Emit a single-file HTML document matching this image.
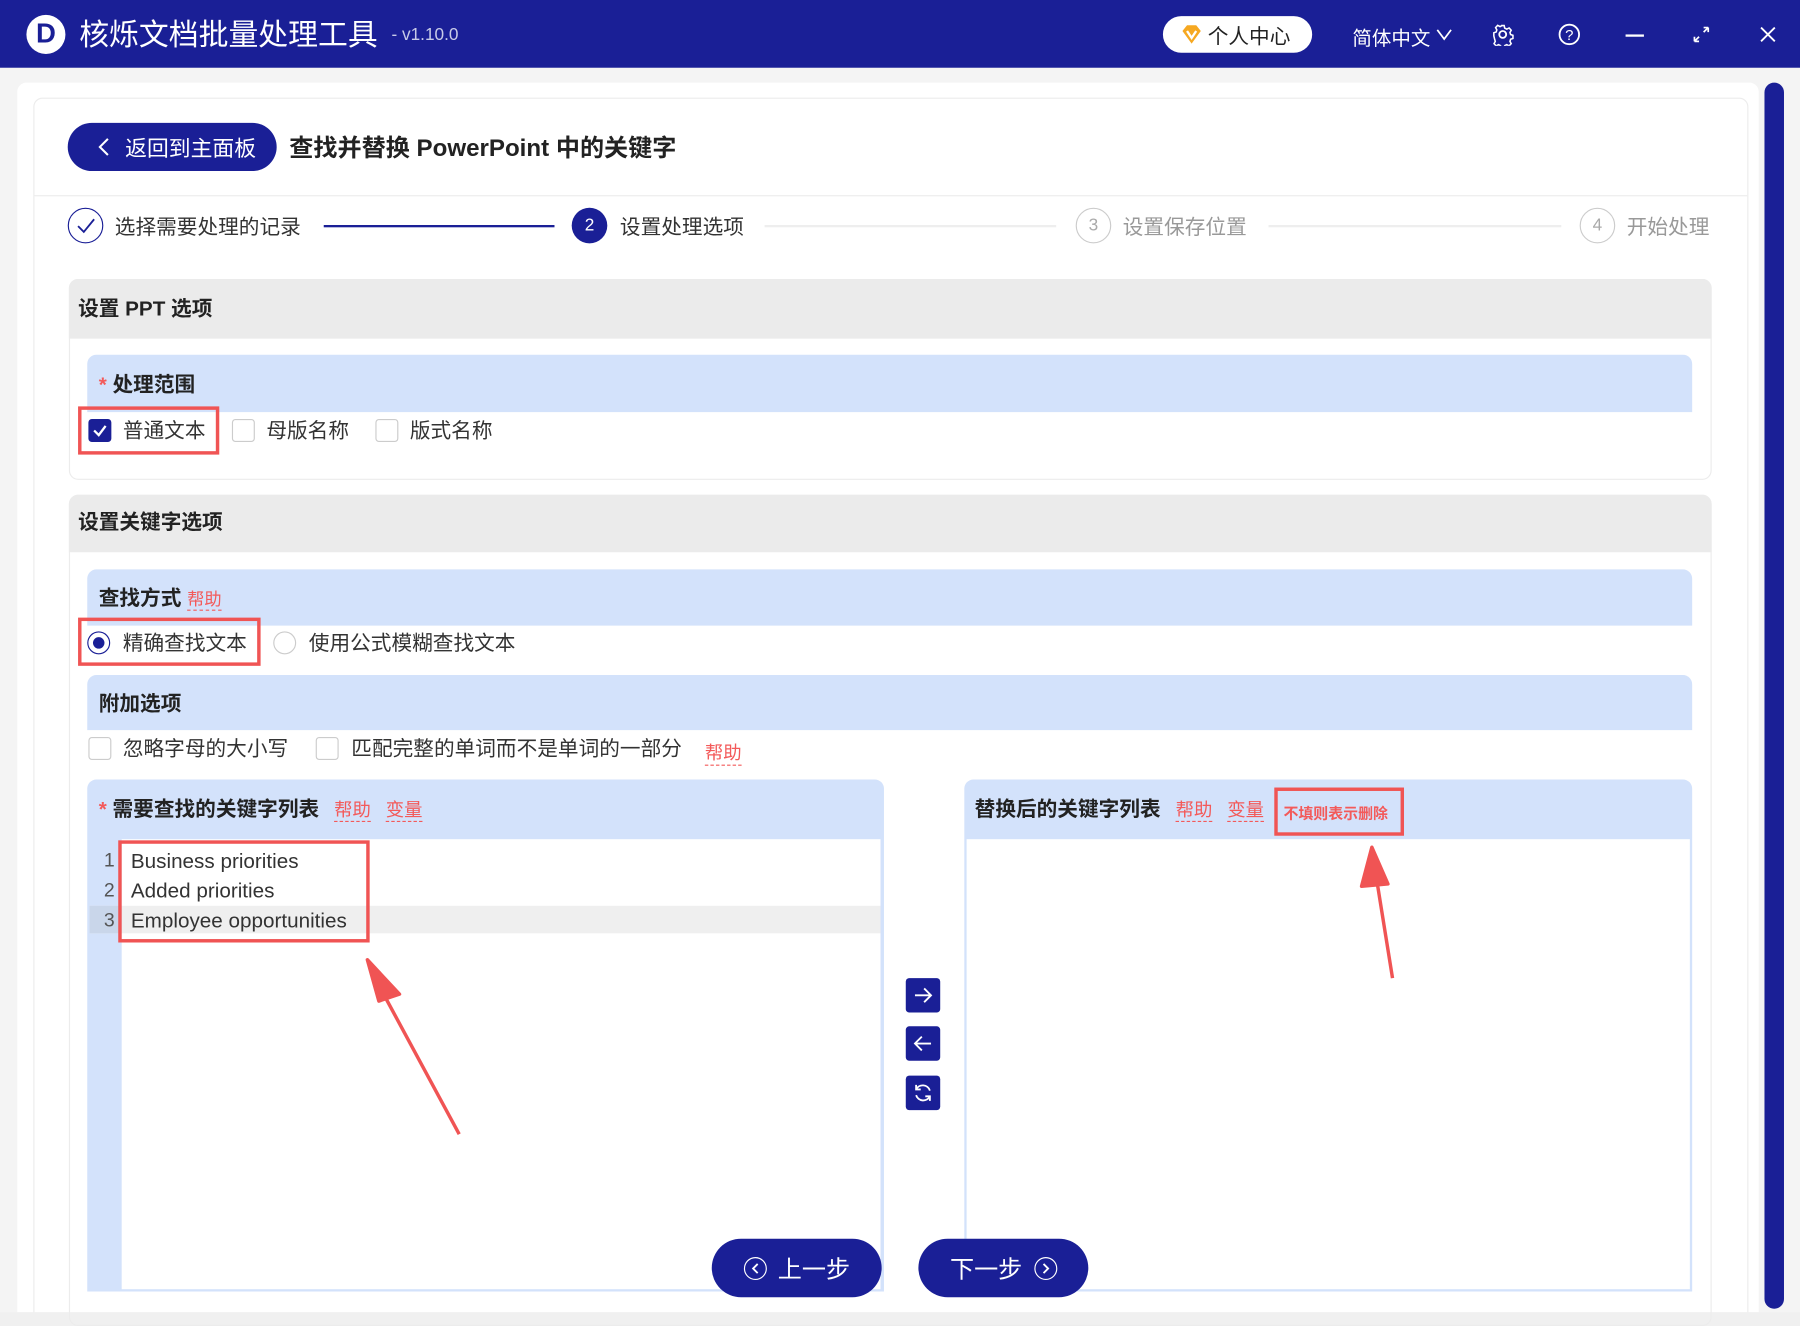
<!DOCTYPE html>
<html><head><meta charset="utf-8"><style>
*{margin:0;padding:0;box-sizing:border-box}
html,body{width:1800px;height:1326px;overflow:hidden;background:#fff}
#w{position:absolute;left:0;top:0;width:1568px;height:1155px;transform:scale(1.148);transform-origin:0 0;font-family:"Liberation Sans","Noto Sans CJK SC",sans-serif;color:#333;background:#f4f4f4}
.a{position:absolute;white-space:nowrap}
.t{font-size:18px;line-height:20px}
.b{font-weight:bold;font-size:18px;color:#222;line-height:20px}
.hdr{position:absolute;background:#ebebeb;border-radius:8px 8px 0 0}
.sub{position:absolute;background:#d3e2fb;border-radius:8px 8px 0 0}
.cb{position:absolute;width:20px;height:20px;border:1px solid #ccc;border-radius:3px;background:#fff}
.red{color:#f35a5a}
.ul{border-bottom:1px dashed #f35a5a}
.rbox{position:absolute;border:3px solid #f05454}
.circ{position:absolute;width:31px;height:31px;border-radius:50%;text-align:center;line-height:29px;font-size:15px}
.mb{position:absolute;left:789px;width:30px;height:30px;background:#1a1f96;border-radius:3px}
.btn{position:absolute;top:1079px;width:148px;height:51px;border-radius:26px;background:#1a1f96;color:#fff;font-size:21px;display:flex;align-items:center;justify-content:center}
.ic{display:inline-flex;align-items:center;justify-content:center;width:20px;height:20px;border:1.6px solid #fff;border-radius:50%}
</style></head><body><div id="w">
<div class="a" style="left:0;top:0;width:1568px;height:59px;background:#1a1f96"></div>
<div class="a" style="left:23px;top:13px;width:34px;height:34px;border-radius:50%;background:#fff;color:#1a1f96;font-weight:bold;font-size:24px;line-height:34px;text-align:center">D</div>
<div class="a" style="left:69px;top:13px;color:#fff;font-size:26px;line-height:34px">核烁文档批量处理工具</div>
<div class="a" style="left:341px;top:22px;color:#c8cbe8;font-size:15px">- v1.10.0</div>
<div class="a" style="left:1013px;top:14px;width:130px;height:32px;border-radius:16px;background:#fff"></div>
<svg class="a" style="left:1029px;top:21px" width="18" height="18" viewBox="0 0 18 18"><path d="M1 6 L5 1 H13 L17 6 L9 17Z" fill="#f6a821"/><path d="M5 6 L9 12 L13 6" stroke="#fff" stroke-width="2" fill="none"/></svg>
<div class="a" style="left:1052px;top:18px;font-size:18px;color:#222">个人中心</div>
<div class="a" style="left:1178px;top:19px;font-size:17px;color:#fff">简体中文</div>
<svg class="a" style="left:1251px;top:24px" width="14" height="12"><path d="M1 2 L7 10 L13 2" stroke="#fff" stroke-width="1.5" fill="none"/></svg>
<svg class="a" style="left:1299px;top:20px" width="20" height="20" viewBox="0 0 20 20"><circle cx="10" cy="10" r="3" stroke="#fff" stroke-width="1.6" fill="none"/><path d="M8.5 1.5h3l.5 2.5 2 1 2.3-1.2 2 2.2-1.2 2.2.6 2 2.3.8v3l-2.3.8-.6 2 1.2 2.2-2 2.2-2.3-1.2-2 1-.5 2.5h-3l-.5-2.5-2-1-2.3 1.2-2-2.2 1.2-2.2-.6-2L1.5 11.5v-3l2.3-.8.6-2-1.2-2.2 2-2.2 2.3 1.2 2-1z" stroke="#fff" stroke-width="1.5" fill="none" transform="scale(.9) translate(1 1)"/></svg>
<svg class="a" style="left:1357px;top:20px" width="20" height="20"><circle cx="10" cy="10" r="8.5" stroke="#fff" stroke-width="1.6" fill="none"/><text x="10" y="15" font-size="13" fill="#fff" text-anchor="middle" font-family="Liberation Sans">?</text></svg>
<div class="a" style="left:1416px;top:30px;width:16px;height:2px;background:#fff"></div>
<svg class="a" style="left:1474px;top:22px" width="16" height="16"><path d="M2 14 L6 10 M14 2 L10 6 M2 14 v-4 M2 14 h4 M14 2 v4 M14 2 h-4" stroke="#fff" stroke-width="1.5" fill="none"/></svg>
<svg class="a" style="left:1532px;top:22px" width="16" height="16"><path d="M2 2 L14 14 M14 2 L2 14" stroke="#fff" stroke-width="1.6"/></svg>
<div class="a" style="left:15px;top:72px;width:1517px;height:1083px;background:#fff;border-radius:8px"></div>
<div class="a" style="left:29px;top:85px;width:1494px;height:1070px;background:#fff;border:1px solid #ececec;border-radius:8px"></div>
<div class="a" style="left:1537px;top:72px;width:17px;height:1068px;background:#1a1f96;border-radius:9px"></div>
<div class="a" style="left:0;top:1143px;width:1568px;height:12px;background:#f0f0f0"></div>
<div class="a" style="left:59px;top:107px;width:182px;height:42px;border-radius:21px;background:#1a1f96"></div>
<svg class="a" style="left:84px;top:119px" width="12" height="18"><path d="M10 2 L3 9 L10 16" stroke="#fff" stroke-width="1.8" fill="none"/></svg>
<div class="a" style="left:109px;top:115px;color:#fff;font-size:19px">返回到主面板</div>
<div class="a" style="left:252px;top:113px;font-size:21px;font-weight:bold;color:#222">查找并替换 PowerPoint 中的关键字</div>
<div class="a" style="left:30px;top:170px;width:1492px;height:1px;background:#ececec"></div>
<div class="circ" style="left:59px;top:181px;border:1px solid #1a1f96"></div>
<svg class="a" style="left:65px;top:188px" width="20" height="18"><path d="M3 9 L8 14 L17 3" stroke="#1a1f96" stroke-width="1.6" fill="none"/></svg>
<div class="a t" style="left:100px;top:188px;color:#333">选择需要处理的记录</div>
<div class="a" style="left:282px;top:196px;width:201px;height:2px;background:#1a1f96"></div>
<div class="circ" style="left:498px;top:181px;background:#1a1f96;color:#fff;line-height:31px">2</div>
<div class="a t" style="left:540px;top:188px;color:#333">设置处理选项</div>
<div class="a" style="left:666px;top:196px;width:254px;height:2px;background:#eee"></div>
<div class="circ" style="left:937px;top:181px;border:1px solid #ccc;color:#aaa">3</div>
<div class="a t" style="left:978px;top:188px;color:#999">设置保存位置</div>
<div class="a" style="left:1105px;top:196px;width:255px;height:2px;background:#eee"></div>
<div class="circ" style="left:1376px;top:181px;border:1px solid #ccc;color:#aaa">4</div>
<div class="a t" style="left:1417px;top:188px;color:#999">开始处理</div>
<div class="a" style="left:60px;top:243px;width:1431px;height:175px;border:1px solid #ececec;border-radius:8px"></div>
<div class="hdr" style="left:60px;top:243px;width:1431px;height:52px"></div>
<div class="a b" style="left:68px;top:259px">设置 PPT 选项</div>
<div class="sub" style="left:76px;top:309px;width:1398px;height:50px"></div>
<div class="a b" style="left:86px;top:325px"><span class="red">*</span> 处理范围</div>
<div class="cb" style="left:77px;top:365px;background:#1a1f96;border-color:#1a1f96"></div>
<svg class="a" style="left:79px;top:367px" width="16" height="16"><path d="M3 8 L7 12 L13 4" stroke="#fff" stroke-width="2" fill="none"/></svg>
<div class="a t" style="left:107px;top:365px">普通文本</div>
<div class="rbox" style="left:68px;top:354px;width:123px;height:42px"></div>
<div class="cb" style="left:202px;top:365px"></div>
<div class="a t" style="left:232px;top:365px">母版名称</div>
<div class="cb" style="left:327px;top:365px"></div>
<div class="a t" style="left:357px;top:365px">版式名称</div>
<div class="a" style="left:60px;top:431px;width:1431px;height:724px;border:1px solid #ececec;border-radius:8px"></div>
<div class="hdr" style="left:60px;top:431px;width:1431px;height:50px"></div>
<div class="a b" style="left:68px;top:445px">设置关键字选项</div>
<div class="sub" style="left:76px;top:496px;width:1398px;height:49px"></div>
<div class="a b" style="left:86px;top:511px">查找方式 <span class="red ul" style="font-weight:normal;font-size:15px">帮助</span></div>
<div class="a" style="left:76px;top:550px;width:20px;height:20px;border-radius:50%;border:1px solid #1a1f96"></div>
<div class="a" style="left:81px;top:555px;width:10px;height:10px;border-radius:50%;background:#1a1f96"></div>
<div class="a t" style="left:107px;top:550px">精确查找文本</div>
<div class="rbox" style="left:68px;top:538px;width:159px;height:42px"></div>
<div class="a" style="left:238px;top:550px;width:20px;height:20px;border-radius:50%;border:1px solid #ccc"></div>
<div class="a t" style="left:269px;top:550px">使用公式模糊查找文本</div>
<div class="sub" style="left:76px;top:588px;width:1398px;height:48px"></div>
<div class="a b" style="left:86px;top:603px">附加选项</div>
<div class="cb" style="left:77px;top:642px"></div>
<div class="a t" style="left:107px;top:642px">忽略字母的大小写</div>
<div class="cb" style="left:275px;top:642px"></div>
<div class="a t" style="left:306px;top:642px">匹配完整的单词而不是单词的一部分</div>
<div class="a red ul" style="left:614px;top:642px;font-size:16px">帮助</div>
<div class="sub" style="left:76px;top:679px;width:694px;height:446px"></div>
<div class="a b" style="left:86px;top:695px"><span class="red">*</span> 需要查找的关键字列表 <span class="red ul" style="font-weight:normal;font-size:16px;margin-left:8px">帮助</span> <span class="red ul" style="font-weight:normal;font-size:16px;margin-left:8px">变量</span></div>
<div class="a" style="left:106px;top:731px;width:661px;height:392px;background:#fff"></div>
<div class="a" style="left:78px;top:789px;width:689px;height:24px;background:#efefef"></div>
<div class="a" style="left:78px;top:789px;width:28px;height:24px;background:#c9d6ea"></div>
<div class="a" style="left:86px;top:737px;font-size:17px;line-height:26px;color:#555;text-align:right;width:14px">1<br>2<br>3</div>
<div class="a" style="left:114px;top:737px;font-size:18px;line-height:26px;color:#333">Business priorities<br>Added priorities<br>Employee opportunities</div>
<div class="rbox" style="left:103px;top:732px;width:219px;height:89px"></div>
<div class="mb" style="top:852px"></div>
<svg class="a" style="left:795px;top:858px" width="18" height="18"><path d="M2 9 H16 M10 3 L16 9 L10 15" stroke="#fff" stroke-width="1.6" fill="none"/></svg>
<div class="mb" style="top:894px"></div>
<svg class="a" style="left:795px;top:900px" width="18" height="18"><path d="M16 9 H2 M8 3 L2 9 L8 15" stroke="#fff" stroke-width="1.6" fill="none"/></svg>
<div class="mb" style="top:937px"></div>
<svg class="a" style="left:795px;top:943px" width="18" height="18"><path d="M15 7 A6.5 6.5 0 0 0 3 6 M3 11 A6.5 6.5 0 0 0 15 12 M3 2 V6 H7 M15 16 V12 H11" stroke="#fff" stroke-width="1.6" fill="none"/></svg>
<div class="sub" style="left:840px;top:679px;width:634px;height:446px"></div>
<div class="a b" style="left:849px;top:695px">替换后的关键字列表 <span class="red ul" style="font-weight:normal;font-size:16px;margin-left:8px">帮助</span> <span class="red ul" style="font-weight:normal;font-size:16px;margin-left:8px">变量</span></div>
<div class="a red" style="left:1118px;top:698px;font-size:13px;font-weight:bold">不填则表示删除</div>
<div class="rbox" style="left:1110px;top:686px;width:113px;height:42px"></div>
<div class="a" style="left:842px;top:731px;width:630px;height:392px;background:#fff"></div>
<svg class="a" style="left:0;top:0" width="1568" height="1155">
<path d="M400 988 L332 862" stroke="#f05454" stroke-width="3"/><path d="M320 836 L348 866 L330 872 Z" fill="#f05454" stroke="#f05454" stroke-width="3" stroke-linejoin="round"/>
<path d="M1213 852 L1199 765" stroke="#f05454" stroke-width="3"/><path d="M1195 738 L1209 770 L1186 772 Z" fill="#f05454" stroke="#f05454" stroke-width="3" stroke-linejoin="round"/>
</svg>
<div class="btn" style="left:620px"><span class="ic" style="margin-right:10px"><svg width="10" height="10"><path d="M7 1 L3 5 L7 9" stroke="#fff" stroke-width="1.6" fill="none"/></svg></span>上一步</div>
<div class="btn" style="left:800px">下一步<span class="ic" style="margin-left:10px"><svg width="10" height="10"><path d="M3 1 L7 5 L3 9" stroke="#fff" stroke-width="1.6" fill="none"/></svg></span></div>
</div></body></html>
